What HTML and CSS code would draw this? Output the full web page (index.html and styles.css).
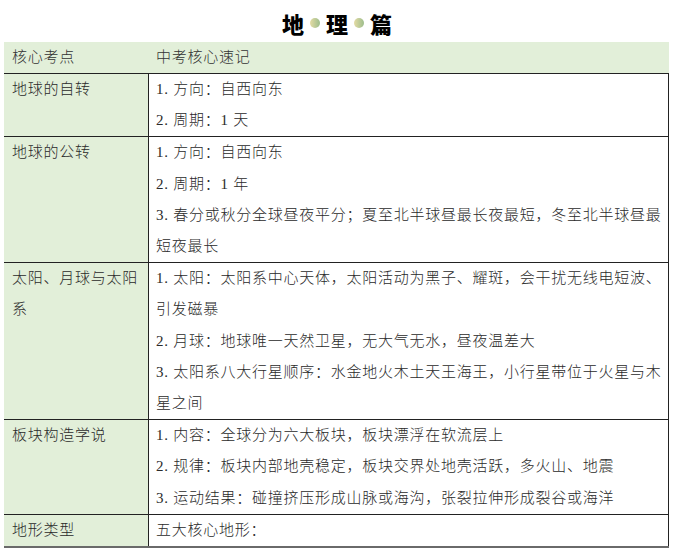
FILE: index.html
```html
<!DOCTYPE html>
<html lang="zh-CN">
<head>
<meta charset="utf-8">
<title>地理篇</title>
<link rel="stylesheet" href="styles.css">
</head>
<body>
<h1 class="title"><span>地</span><i class="dot"></i><span>理</span><i class="dot"></i><span>篇</span></h1>
<div class="table">
  <div class="row head">
    <div class="c1">核心考点</div>
    <div class="c2">中考核心速记</div>
  </div>
  <div class="row">
    <div class="c1">地球的自转</div>
    <div class="c2">1. 方向：自西向东<br>2. 周期：1 天</div>
  </div>
  <div class="row">
    <div class="c1">地球的公转</div>
    <div class="c2">1. 方向：自西向东<br>2. 周期：1 年<br>3. 春分或秋分全球昼夜平分；夏至北半球昼最长夜最短，冬至北半球昼最<br>短夜最长</div>
  </div>
  <div class="row">
    <div class="c1">太阳、月球与太阳<br>系</div>
    <div class="c2">1. 太阳：太阳系中心天体，太阳活动为黑子、耀斑，会干扰无线电短波、<br>引发磁暴<br>2. 月球：地球唯一天然卫星，无大气无水，昼夜温差大<br>3. 太阳系八大行星顺序：水金地火木土天王海王，小行星带位于火星与木<br>星之间</div>
  </div>
  <div class="row">
    <div class="c1">板块构造学说</div>
    <div class="c2">1. 内容：全球分为六大板块，板块漂浮在软流层上<br>2. 规律：板块内部地壳稳定，板块交界处地壳活跃，多火山、地震<br>3. 运动结果：碰撞挤压形成山脉或海沟，张裂拉伸形成裂谷或海洋</div>
  </div>
  <div class="row last">
    <div class="c1">地形类型</div>
    <div class="c2">五大核心地形：</div>
  </div>
</div>
</body>
</html>
```
FILE: styles.css
```css
html, body {
  margin: 0;
  padding: 0;
  background: #ffffff;
}
body {
  width: 674px;
  font-family: "Liberation Serif", "Noto Sans CJK SC", serif;
  color: #2a2a2a;
}
.title {
  margin: 0;
  height: 42px;
  display: flex;
  align-items: center;
  justify-content: center;
  gap: 5px;
  font-family: "Noto Sans CJK SC", sans-serif;
  font-weight: 900;
  font-size: 22px;
  color: #000;
  padding-top: 3px;
  box-sizing: border-box;
}
.title .dot {
  display: inline-block;
  width: 10px;
  height: 10px;
  border-radius: 50%;
  background: linear-gradient(to right, #e4dba4, #9dbd8c);
  margin: 0 1px;
}
.table {
  margin-left: 4px;
  width: 665px;
}
.row {
  display: grid;
  grid-template-columns: 144px 1fr;
  border-top: 1px solid #222;
  font-size: 15px;
  font-weight: 300;
  letter-spacing: 0.75px;
  line-height: 31.2px;
  white-space: nowrap;
}
.row.head {
  border-top: none;
  background: #e2efd9;
  line-height: 31px;
  color: #333;
}
.row.last {
  border-bottom: 2px solid #6a6a6a;
}
.c1 {
  background: #e2efd9;
  padding-left: 8px;
}
.c2 {
  padding-left: 7px;
  border-left: 1px solid #222;
  border-right: 1px solid #222;
}
.head .c2 {
  border-left: 1px solid transparent;
  border-right: 1px solid transparent;
}
```
